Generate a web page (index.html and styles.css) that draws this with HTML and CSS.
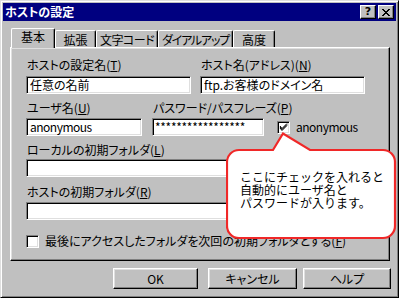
FILE: index.html
```html
<!DOCTYPE html>
<html lang="ja">
<head>
<meta charset="utf-8">
<link rel="stylesheet" href="styles.css">
</head>
<body>
<div class="window">
  <div class="titlebar">
    <span class="title">ホストの設定</span>
    <div class="tbtns">
      <span class="tbtn q">?</span>
      <span class="tbtn"><svg width="10" height="9" viewBox="0 0 10 9"><path d="M1 1 L8 8 M2 1 L9 8 M8 1 L1 8 M9 1 L2 8" stroke="#000" stroke-width="1" fill="none" shape-rendering="crispEdges"/></svg></span>
    </div>
  </div>
  <div class="tabs">
    <div class="tab sel">基本</div>
    <div class="tab t2">拡張</div>
    <div class="tab t3">文字コード</div>
    <div class="tab t4">ダイアルアップ</div>
    <div class="tab t5">高度</div>
  </div>
  <div class="panel">
    <div class="row">
      <div class="field f-name"><div class="label">ホストの設定名(<u>T</u>)</div><div class="input">任意の名前</div></div>
      <div class="field f-host"><div class="label">ホスト名(アドレス)(<u>N</u>)</div><div class="input">ftp.お客様のドメイン名</div></div>
    </div>
    <div class="row row2">
      <div class="field f-user"><div class="label">ユーザ名(<u>U</u>)</div><div class="input lat">anonymous</div></div>
      <div class="field f-pass"><div class="label">パスワード/パスフレーズ(<u>P</u>)</div><div class="input pw">*****************</div></div>
      <div class="check anon"><span class="box"><svg width="11" height="11" viewBox="0 0 11 11"><path d="M2 4 L4 6.5 L9 1.5 M2 5 L4 7.5 L9 2.5 M2 6 L4 8.5 L9 3.5" stroke="#000" stroke-width="1" fill="none"/></svg></span><span class="ctext lat">anonymous</span></div>
    </div>
    <div class="field f-local"><div class="label">ローカルの初期フォルダ(<u>L</u>)</div><div class="input"></div></div>
    <div class="field f-remote"><div class="label">ホストの初期フォルダ(<u>R</u>)</div><div class="input"></div></div>
    <div class="check last"><span class="box"></span><span class="ctext">最後にアクセスしたフォルダを次回の初期フォルダとする(<u>F</u>)</span></div>
  </div>
  <div class="buttons">
    <div class="btn ok">OK</div>
    <div class="btn cancel">キャンセル</div>
    <div class="btn help">ヘルプ</div>
  </div>
  <div class="callout">
    <svg class="bubble" width="172" height="108" viewBox="0 0 172 108">
      <path d="M13 18 L47 18 L57 1.5 L84 18 L157 18 A12 12 0 0 1 169 30 L169 94 A12 12 0 0 1 157 106 L13 106 A12 12 0 0 1 1 94 L1 30 A12 12 0 0 1 13 18 Z" fill="#fff" stroke="#f02828" stroke-width="2.2" stroke-linejoin="miter"/>
    </svg>
    <div class="ctxt">ここにチェックを入れると<br>自動的にユーザ名と<br>パスワードが入ります。</div>
  </div>
</div>
</body>
</html>
```

FILE: styles.css
```css
* { box-sizing: border-box; }
html, body { margin: 0; padding: 0; background: #c0c0c0; }
body {
  font-family: "Noto Sans CJK JP", "Noto Sans", sans-serif;
  font-size: 12px;
  color: #000;
  font-feature-settings: "palt";
}
.window {
  position: relative;
  width: 399px;
  height: 298px;
  background: #c0c0c0;
  border: 1px solid;
  border-color: #dfdfdf #000 #000 #dfdfdf;
  box-shadow: inset 1px 1px #fff, inset -1px -1px #808080;
  padding: 2px;
  overflow: hidden;
}
.titlebar {
  height: 18px;
  background: #000080;
  display: flex;
  justify-content: space-between;
  align-items: flex-start;
}
.title {
  color: #fff;
  font-weight: bold;
  line-height: 18px;
  padding-left: 2px;
}
.tbtns {
  display: flex;
  gap: 2px;
  margin-top: 2px;
  margin-right: 2px;
}
.tbtn {
  width: 16px;
  height: 14px;
  background: #c0c0c0;
  border: 1px solid;
  border-color: #fff #000 #000 #fff;
  box-shadow: inset -1px -1px #808080;
  display: flex;
  align-items: center;
  justify-content: center;
  font-family: "DejaVu Sans", sans-serif;
  font-weight: bold;
  font-size: 11px;
  line-height: 12px;
}
.tabs {
  display: flex;
  align-items: flex-end;
  height: 20px;
  margin-top: 7px;
  margin-bottom: -1px;
  padding-left: 8px;
  position: relative;
  z-index: 1;
}
.tab {
  height: 17px;
  margin-bottom: 1px;
  border-top: 1px solid #fff;
  border-left: 1px solid #fff;
  border-right: 1px solid #000;
  border-radius: 2px 2px 0 0;
  box-shadow: inset -1px 0 #808080;
  background: #c0c0c0;
  text-align: center;
  line-height: 15px;
  padding-top: 1px;
  white-space: nowrap;
  overflow: hidden;
}
.tab.sel {
  width: 44px;
  height: 20px;
  margin-bottom: 0;
  padding-top: 0;
  line-height: 16px;
}
.t2 { width: 41px; }
.t3 { width: 62px; letter-spacing: -0.5px; }
.t4 { width: 75px; letter-spacing: -1.2px; }
.t5 { width: 42px; }
.panel {
  margin-left: 7px;
  width: 380px;
  height: 214px;
  border: 1px solid;
  border-color: #fff #000 #000 #fff;
  box-shadow: inset -1px -1px #808080, inset 1px 1px #dfdfdf;
  padding: 10px 0 0 15px;
}
.row { display: flex; align-items: flex-start; }
.label { line-height: 14px; height: 14px; padding-left: 1px; white-space: nowrap; }
.input {
  height: 18px;
  background: #fff;
  border: 1px solid;
  border-color: #808080 #fff #fff #808080;
  box-shadow: inset 1px 1px #000, inset -1px -1px #dfdfdf;
  padding-left: 3px;
  line-height: 16px;
  white-space: nowrap;
  overflow: hidden;
}
.lat { letter-spacing: -0.5px; }
.f-name .input, .f-host .input { margin-top: 4px; }
.f-name { width: 165px; }
.f-host { width: 165px; margin-left: 9px; }
.row2 { margin-top: 7px; }
.f-user .input, .f-pass .input { margin-top: 3px; }
.f-user { width: 116px; }
.f-pass { width: 112px; margin-left: 10px; }
.pw { letter-spacing: -0.3px; padding-left: 2px; }
.check { display: flex; align-items: center; }
.box {
  width: 13px;
  height: 13px;
  background: #fff;
  border: 1px solid;
  border-color: #808080 #fff #fff #808080;
  box-shadow: inset 1px 1px #000, inset -1px -1px #dfdfdf;
  display: flex;
  align-items: center;
  justify-content: center;
  flex: none;
}
.ctext { margin-left: 6px; white-space: nowrap; line-height: 14px; }
.anon { margin-left: 13px; margin-top: 19px; }
.f-local { margin-top: 7px; width: 339px; }
.f-local .input { margin-top: 2px; }
.f-remote { margin-top: 8px; width: 339px; }
.f-remote .input { margin-top: 3px; }
.last { margin-top: 14px; }
.buttons {
  display: flex;
  justify-content: flex-end;
  margin-top: 7px;
  padding-right: 5px;
}
.btn {
  height: 21px;
  border: 1px solid;
  border-color: #fff #000 #000 #fff;
  box-shadow: inset -1px -1px #808080, inset 1px 1px #dfdfdf;
  text-align: center;
  line-height: 19px;
}
.ok { width: 85px; }
.cancel { width: 89px; margin-left: 10px; }
.help { width: 88px; margin-left: 6px; }
.callout {
  position: absolute;
  left: 225px;
  top: 131px;
  width: 172px;
  height: 108px;
  z-index: 5;
}
.bubble { position: absolute; left: 0; top: 0; }
.ctxt {
  position: absolute;
  left: 14px;
  top: 38px;
  line-height: 13px;
  white-space: nowrap;
  font-feature-settings: normal;
}
```
